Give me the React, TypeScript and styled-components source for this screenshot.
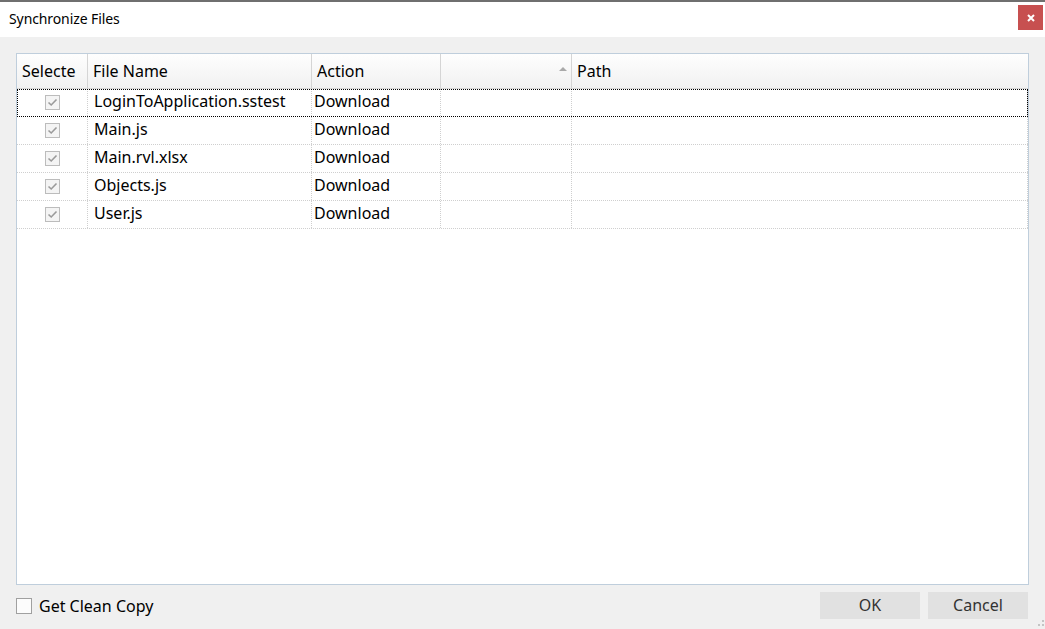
import React, { FC } from 'react'
import styled, { createGlobalStyle } from 'styled-components'

const GlobalStyle = createGlobalStyle`
    html, body {
        margin: 0;
        padding: 0;
        background: #f0f0f0;
    }
    body {
        font-family: "Noto Sans", "Open Sans", sans-serif;
        color: #000;
    }
`

const Window = styled.div`
    width: 1045px;
    height: 629px;
    display: flex;
    flex-direction: column;
    background: #f0f0f0;
    border-top: 2px solid #6f6f6f;
    box-sizing: border-box;
    position: relative;
    overflow: hidden;
`

const TitleBar = styled.div`
    height: 35px;
    background: #fff;
    display: flex;
    align-items: center;
    justify-content: space-between;
    padding: 0 2px 0 9px;
    flex-shrink: 0;
`

const Title = styled.div`
    font-size: 14px;
    letter-spacing: -0.1px;
    margin-top: -2px;
`

const CloseButton = styled.button`
    width: 25px;
    height: 25px;
    margin-top: -4px;
    border: none;
    background: #c75050;
    color: #fff;
    display: flex;
    align-items: center;
    justify-content: center;
    padding: 0;
`

const Body = styled.div`
    flex: 1;
    display: flex;
    flex-direction: column;
    padding: 16px 16px 10px;
    min-height: 0;
`

const Grid = styled.div`
    flex: 1;
    background: #fff;
    border: 1px solid #bfcedc;
    display: flex;
    flex-direction: column;
`

const columns = '71px 224px 129px 131px 1fr'

const HeaderRow = styled.div`
    display: grid;
    grid-template-columns: ${columns};
    height: 34px;
    background: linear-gradient(#fefefe, #f1f1f1);
    border-bottom: 1px solid #d5d5d5;
`

const HeaderCell = styled.div<{ $last?: boolean }>`
    position: relative;
    display: flex;
    align-items: center;
    padding: 0 0 1px 5px;
    font-size: 16px;
    border-right: ${p => p.$last ? 'none' : '1px solid #d5d5d5'};
`

const SortArrow = styled.span`
    position: absolute;
    right: 4px;
    top: 13px;
    width: 0;
    height: 0;
    border-left: 4px solid transparent;
    border-right: 4px solid transparent;
    border-bottom: 4px solid #a9a9a9;
`

const Row = styled.div<{ $focused?: boolean }>`
    display: grid;
    grid-template-columns: ${columns};
    height: 28px;
    box-sizing: border-box;
    border-bottom: 1px dotted #cfcfcf;
    outline: ${p => p.$focused ? '1px dotted #000' : 'none'};
    outline-offset: -1px;
`

const Cell = styled.div<{ $pad?: number; $center?: boolean }>`
    display: flex;
    align-items: center;
    justify-content: ${p => p.$center ? 'center' : 'flex-start'};
    padding: ${p => p.$center ? '0' : '0 0 3px'};
    padding-left: ${p => p.$pad ?? 0}px;
    font-size: 16px;
    border-right: 1px dotted #cfcfcf;
    white-space: nowrap;
`

const CheckBox = styled.span<{ $size: number; $disabled?: boolean }>`
    width: ${p => p.$size}px;
    height: ${p => p.$size}px;
    box-sizing: border-box;
    border: 1px solid ${p => p.$disabled ? '#bcbcbc' : '#a0a0a0'};
    background: ${p => p.$disabled ? '#f4f4f4' : '#fcfcfc'};
    display: inline-flex;
    align-items: center;
    justify-content: center;
`

const Footer = styled.div`
    display: flex;
    align-items: center;
    justify-content: space-between;
    height: 27px;
    margin-top: 7px;
`

const CleanCopy = styled.label`
    display: flex;
    align-items: center;
    gap: 7px;
    font-size: 16px;
    margin-top: 1px;
`

const Buttons = styled.div`
    display: flex;
    gap: 8px;
    margin-right: 1px;
`

const DialogButton = styled.button`
    width: 100px;
    height: 27px;
    border: none;
    background: #e1e1e1;
    color: #333;
    font-family: "Noto Sans", "Open Sans", sans-serif;
    font-size: 16px;
    padding: 0 0 2px;
`

const Grip = styled.svg`
    position: absolute;
    right: 0;
    bottom: 0;
`

const files = [
    'LoginToApplication.sstest',
    'Main.js',
    'Main.rvl.xlsx',
    'Objects.js',
    'User.js',
]

const Check: FC = () => (
    <svg width="11" height="9" viewBox="0 0 11 9">
        <path d="M1.5 4.5 L4.2 7 L9.5 1.5" fill="none" stroke="#9a9a9a" strokeWidth="1.6" />
    </svg>
)

const App: FC = () => (
    <>
        <GlobalStyle />
        <Window>
            <TitleBar>
                <Title>Synchronize Files</Title>
                <CloseButton aria-label="Close">
                    <svg width="8" height="8" viewBox="0 0 8 8">
                        <path d="M1 1 L7 7 M7 1 L1 7" stroke="#fff" strokeWidth="2" />
                    </svg>
                </CloseButton>
            </TitleBar>
            <Body>
                <Grid>
                    <HeaderRow>
                        <HeaderCell>Selecte</HeaderCell>
                        <HeaderCell>File Name</HeaderCell>
                        <HeaderCell>Action</HeaderCell>
                        <HeaderCell><SortArrow /></HeaderCell>
                        <HeaderCell $last>Path</HeaderCell>
                    </HeaderRow>
                    {files.map((name, i) => (
                        <Row key={name} $focused={i === 0}>
                            <Cell $center>
                                <CheckBox $size={15} $disabled><Check /></CheckBox>
                            </Cell>
                            <Cell $pad={6}>{name}</Cell>
                            <Cell $pad={2}>Download</Cell>
                            <Cell />
                            <Cell />
                        </Row>
                    ))}
                </Grid>
                <Footer>
                    <CleanCopy>
                        <CheckBox $size={16} />
                        Get Clean Copy
                    </CleanCopy>
                    <Buttons>
                        <DialogButton>OK</DialogButton>
                        <DialogButton>Cancel</DialogButton>
                    </Buttons>
                </Footer>
            </Body>
            <Grip width="8" height="10" viewBox="0 0 8 10">
                <rect x="5" y="1" width="2" height="2" fill="#c4c4c4" />
                <rect x="1" y="5" width="2" height="2" fill="#c4c4c4" />
                <rect x="5" y="5" width="2" height="2" fill="#c4c4c4" />
            </Grip>
        </Window>
    </>
)

export default App
